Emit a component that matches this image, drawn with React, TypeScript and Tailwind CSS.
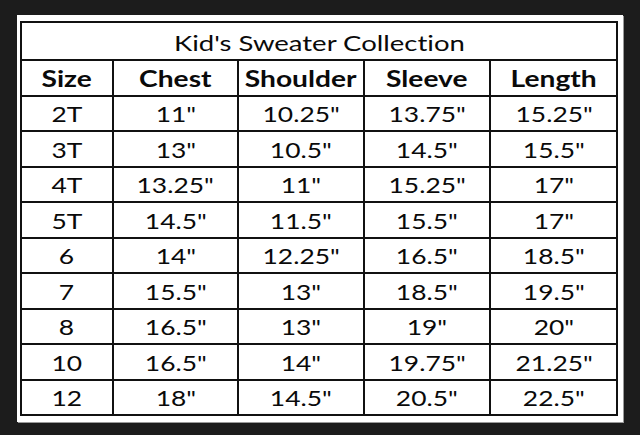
const HEAD = ["Size", "Chest", "Shoulder", "Sleeve", "Length"];

const ROWS: string[][] = [
  ["2T", '11"', '10.25"', '13.75"', '15.25"'],
  ["3T", '13"', '10.5"', '14.5"', '15.5"'],
  ["4T", '13.25"', '11"', '15.25"', '17"'],
  ["5T", '14.5"', '11.5"', '15.5"', '17"'],
  ["6", '14"', '12.25"', '16.5"', '18.5"'],
  ["7", '15.5"', '13"', '18.5"', '19.5"'],
  ["8", '16.5"', '13"', '19"', '20"'],
  ["10", '16.5"', '14"', '19.75"', '21.25"'],
  ["12", '18"', '14.5"', '20.5"', '22.5"'],
];

export default function App() {
  return (
    <div
      className="w-[640px] h-[435px] bg-[#1c1c1c] pt-[15px] pl-[17px]"
      style={{ fontFamily: "Lato, 'Open Sans', sans-serif" }}
    >
      <div className="w-[606px] h-[407px] bg-white pt-[6px] pl-[3px] shadow-[1px_1px_0_#9a9a9a]">
        {/* source image is stretched sideways, so text spans get scale-x */}
        <table className="w-[598px] border-collapse border-[2.5px] border-[#111] text-[#0a0a0a] text-[22px] leading-none [font-variant-ligatures:none]">
          <colgroup>
            <col className="w-[92px]" />
            <col className="w-[126px]" />
            <col className="w-[126px]" />
            <col className="w-[127px]" />
            <col className="w-[127px]" />
          </colgroup>
          <thead>
            <tr className="h-[38px]">
              <th colSpan={5} className="border-2 border-[#111] font-normal text-center pt-[3px]">
                <span className="inline-block scale-x-[1.25]">Kid's Sweater Collection</span>
              </th>
            </tr>
            <tr className="h-[35.5px]">
              {HEAD.map((h) => (
                <th key={h} className="border-2 border-[#111] font-bold text-center pt-[2px]">
                  <span className="inline-block scale-x-[1.28]">{h}</span>
                </th>
              ))}
            </tr>
          </thead>
          <tbody>
            {ROWS.map((r) => (
              <tr key={r[0]} className="h-[35.5px]">
                {r.map((v, i) => (
                  <td key={i} className="border-2 border-[#111] text-center pt-[2px]">
                    <span className="inline-block scale-x-[1.2]">{v}</span>
                  </td>
                ))}
              </tr>
            ))}
          </tbody>
        </table>
      </div>
    </div>
  );
}
